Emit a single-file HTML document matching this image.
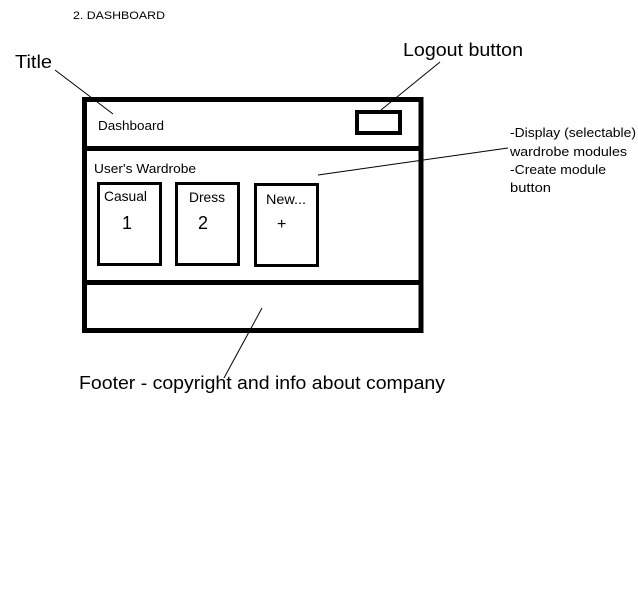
<!DOCTYPE html>
<html><head><style>html,body{margin:0;padding:0;background:#fff;width:638px;height:610px;overflow:hidden}</style></head>
<body>
<svg width="638" height="610" xmlns="http://www.w3.org/2000/svg" font-family="Liberation Sans, sans-serif" fill="#000">
<rect x="84.5" y="99.5" width="336.5" height="231" fill="none" stroke="#000" stroke-width="5"/>
<line x1="82" y1="148.5" x2="423" y2="148.5" stroke="#000" stroke-width="5"/>
<line x1="82" y1="282.5" x2="423" y2="282.5" stroke="#000" stroke-width="5"/>
<rect x="357" y="112" width="43" height="21" fill="none" stroke="#000" stroke-width="4"/>
<rect x="98.5" y="183.5" width="62" height="81" fill="none" stroke="#000" stroke-width="3"/>
<rect x="176.5" y="183.5" width="62" height="81" fill="none" stroke="#000" stroke-width="3"/>
<rect x="255.5" y="184.5" width="62" height="81" fill="none" stroke="#000" stroke-width="3"/>
<g stroke="#000" stroke-width="1">
<line x1="55" y1="70" x2="113" y2="114"/>
<line x1="440" y1="62" x2="381" y2="110"/>
<line x1="318" y1="175" x2="508" y2="148"/>
<line x1="262" y1="308" x2="224" y2="378"/>
</g>
<text x="73" y="19" font-size="11" textLength="92" lengthAdjust="spacingAndGlyphs">2. DASHBOARD</text>
<text x="15" y="68" font-size="18" textLength="37" lengthAdjust="spacingAndGlyphs">Title</text>
<text x="403" y="56" font-size="18" textLength="120" lengthAdjust="spacingAndGlyphs">Logout button</text>
<text x="98" y="130" font-size="13" textLength="66" lengthAdjust="spacingAndGlyphs">Dashboard</text>
<text x="94" y="173" font-size="13" textLength="102" lengthAdjust="spacingAndGlyphs">User's Wardrobe</text>
<text x="104" y="201" font-size="14" textLength="43" lengthAdjust="spacingAndGlyphs">Casual</text>
<text x="122" y="229" font-size="18">1</text>
<text x="189" y="202" font-size="14" textLength="36" lengthAdjust="spacingAndGlyphs">Dress</text>
<text x="198" y="229" font-size="18">2</text>
<text x="266" y="204" font-size="14" textLength="40" lengthAdjust="spacingAndGlyphs">New...</text>
<text x="277" y="229" font-size="16">+</text>
<text x="510" y="137" font-size="13" textLength="126" lengthAdjust="spacingAndGlyphs">-Display (selectable)</text>
<text x="510" y="156" font-size="13" textLength="117" lengthAdjust="spacingAndGlyphs">wardrobe modules</text>
<text x="510" y="174" font-size="13" textLength="96" lengthAdjust="spacingAndGlyphs">-Create module</text>
<text x="510" y="192" font-size="13" textLength="41" lengthAdjust="spacingAndGlyphs">button</text>
<text x="79" y="389" font-size="18" textLength="366" lengthAdjust="spacingAndGlyphs">Footer - copyright and info about company</text>
</svg>
</body></html>
